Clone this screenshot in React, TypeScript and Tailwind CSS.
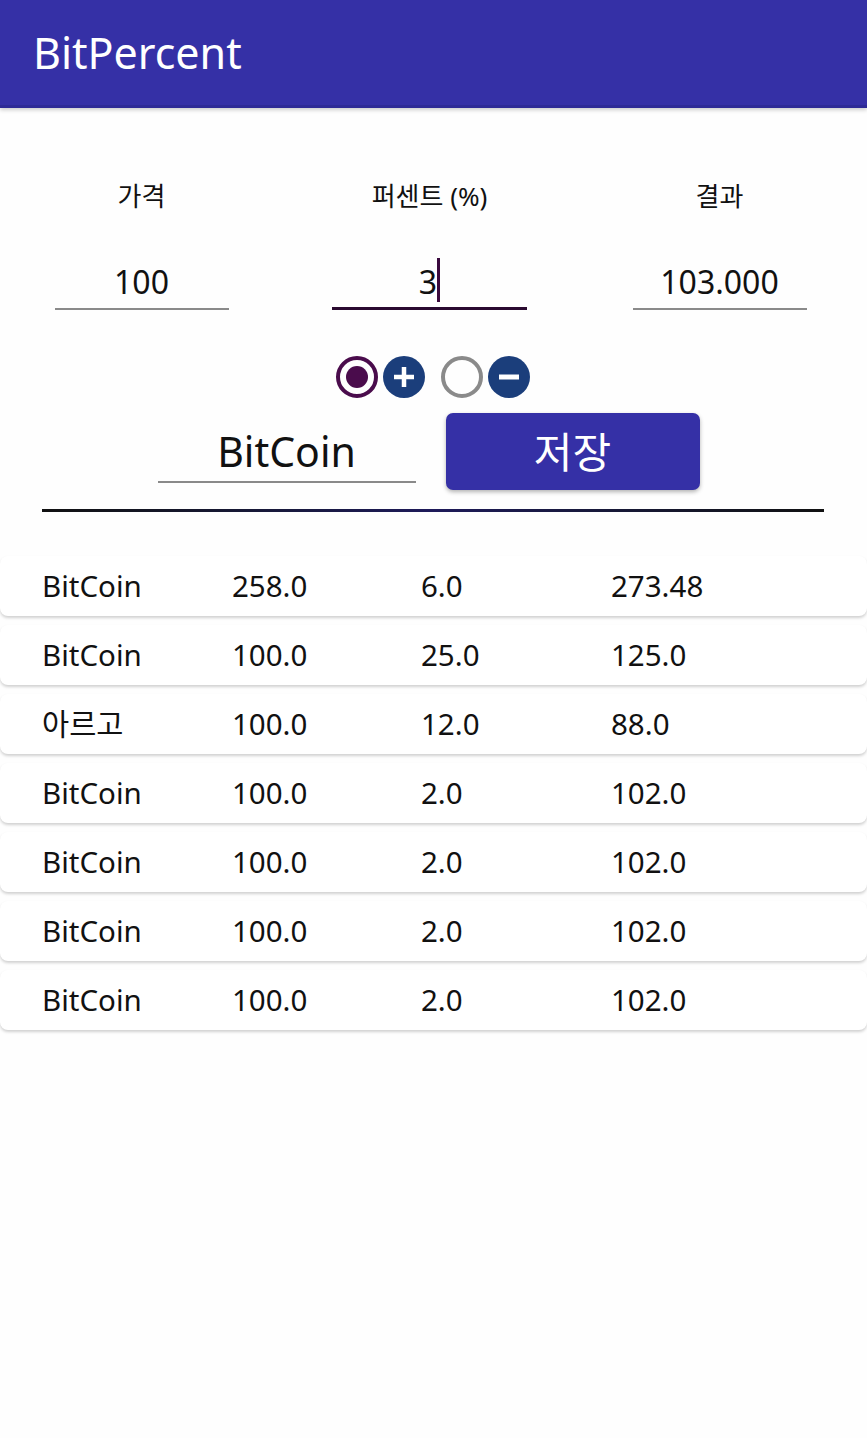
import React from "react";

const FONT = { fontFamily: '"Noto Sans", "Noto Sans CJK KR", sans-serif' };

const rows = [
  ["BitCoin", "258.0", "6.0", "273.48"],
  ["BitCoin", "100.0", "25.0", "125.0"],
  ["아르고", "100.0", "12.0", "88.0"],
  ["BitCoin", "100.0", "2.0", "102.0"],
  ["BitCoin", "100.0", "2.0", "102.0"],
  ["BitCoin", "100.0", "2.0", "102.0"],
  ["BitCoin", "100.0", "2.0", "102.0"],
];

const Field = ({ label, value, focused, width }: { label: string; value: string; focused?: boolean; width: string }) => (
  <div className="flex flex-col items-center">
    <div className="h-[32px] text-[26px] leading-[32px] text-[#111]">{label}</div>
    <div
      className={`mt-[46px] h-[52px] flex items-start justify-center pt-[4px] ${width} ${
        focused ? "border-b-[3px] border-[#2a0a30]" : "border-b-2 border-[#8a8a8a]"
      }`}
    >
      <span className="text-[32px] leading-[40px] text-[#111]">{value}</span>
      {focused && <span className="w-[3px] h-[44px] -mt-[4px] bg-[#3a0a3e]" />}
    </div>
  </div>
);

export default function App() {
  return (
    <div className="min-h-[1438px] bg-[#fefefe]" style={FONT}>
      {/* App bar */}
      <div className="h-[108px] bg-[#3530a6] border-b-[3px] border-[#2e2a96] shadow-[0_2px_4px_rgba(0,0,0,0.2)] flex items-center pl-[33px]">
        <span className="text-white text-[43px] leading-none -mt-[1px]">BitPercent</span>
      </div>

      {/* Inputs */}
      <div className="pt-[72px] grid grid-cols-3">
        <div className="flex justify-center pr-[6px]">
          <Field label="가격" value="100" width="w-[174px]" />
        </div>
        <div className="flex justify-center pr-[8px]">
          <Field label="퍼센트 (%)" value="3" focused width="w-[195px]" />
        </div>
        <div className="flex justify-center pr-[6px]">
          <Field label="결과" value="103.000" width="w-[174px]" />
        </div>
      </div>

      {/* Radio row */}
      <div className="mt-[45px] flex justify-center items-center pr-[2px]">
        <svg width="44" height="44" viewBox="0 0 44 44">
          <circle cx="22" cy="22" r="19" fill="none" stroke="#4a0c4c" strokeWidth="4" />
          <circle cx="22" cy="22" r="11" fill="#4a0c4c" />
        </svg>
        <svg width="44" height="44" viewBox="0 0 44 44" className="ml-[3px]">
          <circle cx="22" cy="22" r="21" fill="#1b3e7b" />
          <path d="M22 12v20M12 22h20" stroke="#fff" strokeWidth="4.5" />
        </svg>
        <svg width="44" height="44" viewBox="0 0 44 44" className="ml-[14px]">
          <circle cx="22" cy="22" r="19" fill="none" stroke="#8a8a8a" strokeWidth="4" />
        </svg>
        <svg width="44" height="44" viewBox="0 0 44 44" className="ml-[3px]">
          <circle cx="22" cy="22" r="21" fill="#1b3e7b" />
          <path d="M12 22h20" stroke="#fff" strokeWidth="5" />
        </svg>
      </div>

      {/* Name + save */}
      <div className="mt-[14px] flex justify-center items-start gap-[30px] pr-[10px]">
        <div className="w-[258px] h-[70px] border-b-2 border-[#8a8a8a] flex justify-center pt-[12px]">
          <span className="text-[41px] leading-[52px] text-[#111]">BitCoin</span>
        </div>
        <button className="w-[254px] h-[77px] rounded-[7px] bg-[#3530a6] shadow-[0_2px_4px_rgba(0,0,0,0.3)] text-white text-[42px] leading-none">
          저장
        </button>
      </div>

      {/* Divider */}
      <div className="mt-[19px] ml-[42px] mr-[43px] h-[3px] bg-gradient-to-r from-[#111] via-[#1e1a5a] to-[#111]" />

      {/* List */}
      <div className="mt-[44px] flex flex-col gap-[9px]">
        {rows.map((r, i) => (
          <div
            key={i}
            className="h-[60px] rounded-[8px] bg-white shadow-[0_2px_3px_rgba(0,0,0,0.18)] grid grid-cols-[190px_189px_190px_1fr] items-center pl-[42px] text-[29.5px] text-[#111]"
          >
            {r.map((c, j) => (
              <span key={j} className="leading-[36px]">
                {c}
              </span>
            ))}
          </div>
        ))}
      </div>
    </div>
  );
}
